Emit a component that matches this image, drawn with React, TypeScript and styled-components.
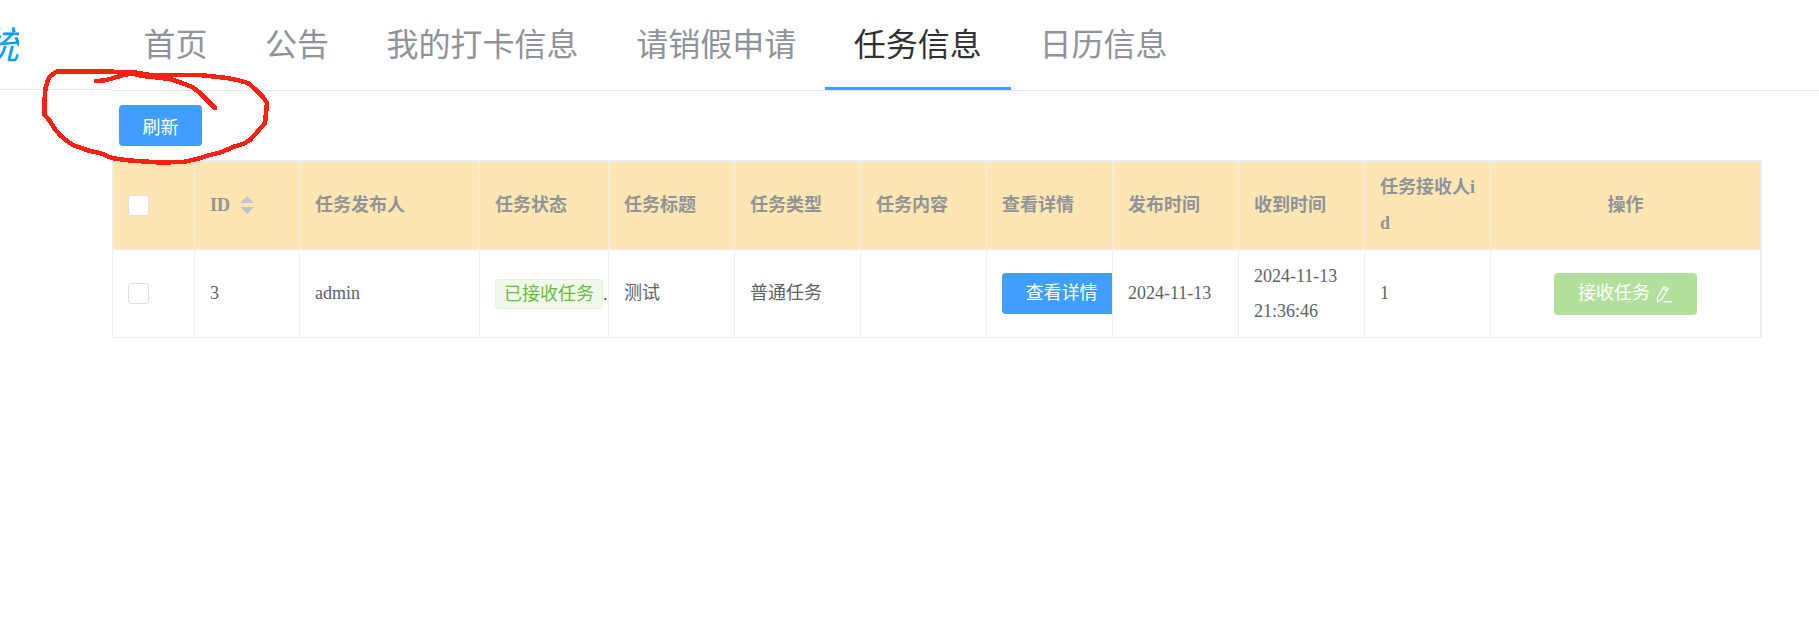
import React from "react";
import styled, { createGlobalStyle } from "styled-components";

const Global = createGlobalStyle`
  html, body { margin: 0; padding: 0; background: #fff; }
  body {
    font-family: "Liberation Serif", "Noto Sans CJK SC", serif;
    font-size: 18px;
    color: #606266;
    overflow: hidden;
  }
`;

const Page = styled.div`
  position: relative;
  width: 1819px;
  height: 628px;
`;

const Header = styled.header`
  display: flex;
  align-items: flex-start;
  height: 91px;
`;

const LogoBox = styled.div`
  display: flex;
  box-sizing: border-box;
  width: 112px;
  height: 90px;
  border-bottom: 1px solid #e6e6e6;
  overflow: hidden;
`;

const LogoClip = styled.div`
  display: flex;
  justify-content: flex-end;
  width: 19px;
  overflow: hidden;
  flex: none;
`;

const Logo = styled.span`
  flex: none;
  font-size: 38px;
  line-height: 92px;
  font-style: italic;
  color: #0a9dff;
  white-space: nowrap;
`;

const Menu = styled.nav`
  display: flex;
  flex: 1;
  box-sizing: border-box;
  height: 91px;
  padding-left: 2.6px;
  border-bottom: 1px solid #e6e6e6;
`;

const Tab = styled.div<{ $active?: boolean }>`
  box-sizing: border-box;
  height: 90px;
  padding: 0 28.8px;
  font-size: 32px;
  line-height: 90px;
  white-space: nowrap;
  color: ${(p) => (p.$active ? "#303133" : "#909399")};
  border-bottom: 3px solid ${(p) => (p.$active ? "#409eff" : "transparent")};
`;

const Main = styled.main`
  padding: 14px 57px 0 112px;
`;

const Toolbar = styled.div`
  display: flex;
  height: 41px;
  padding-left: 7px;
  margin-bottom: 14px;
`;

const Button = styled.button<{ $color?: string }>`
  flex: none;
  box-sizing: border-box;
  height: 41px;
  padding: 0 23.5px;
  border: 0;
  border-radius: 4px;
  background: ${(p) => p.$color ?? "#409eff"};
  color: #fff;
  font: inherit;
  white-space: nowrap;
  display: inline-flex;
  align-items: center;
  gap: 5px;
`;

const Table = styled.table`
  table-layout: fixed;
  width: 1650px;
  border-collapse: separate;
  border-spacing: 0;
  border-top: 2px solid #ebeef5;
  border-left: 1px solid #ebeef5;
  border-right: 1px solid #ebeef5;
`;

const Col = styled.col<{ $w: number }>`
  width: ${(p) => p.$w}px;
`;

const Th = styled.th<{ $center?: boolean }>`
  box-sizing: border-box;
  height: 88px;
  padding: 7px 15px 8px;
  background: #fee6b3;
  color: #909399;
  font-weight: bold;
  line-height: 36px;
  text-align: ${(p) => (p.$center ? "center" : "left")};
  border-right: 1px solid #ebeef5;
  border-bottom: 1px solid #ebeef5;
  word-break: break-all;
  vertical-align: middle;
`;

const Td = styled.td<{ $center?: boolean }>`
  box-sizing: border-box;
  height: 88px;
  padding: 8px 0 8px 15px;
  background: #fff;
  line-height: 35px;
  text-align: ${(p) => (p.$center ? "center" : "left")};
  border-right: 1px solid #ebeef5;
  border-bottom: 1px solid #ebeef5;
  vertical-align: middle;
  overflow: hidden;
  white-space: nowrap;
`;

const ActionTd = styled(Td)`
  padding-left: 0;
`;

const ActionButton = styled(Button)`
  height: 42px;
  padding: 0 24px;
  vertical-align: middle;
`;

const Check = styled.span`
  display: block;
  box-sizing: border-box;
  width: 21px;
  height: 21px;
  background: #fff;
  border: 1px solid #dcdfe6;
  border-radius: 3px;
`;

const IdHead = styled.span`
  display: inline-flex;
  align-items: center;
  gap: 10px;
`;

const Tag = styled.span`
  display: inline-block;
  box-sizing: border-box;
  height: 30px;
  padding: 0 8px;
  line-height: 28px;
  color: #67c23a;
  background: #f0f9eb;
  border: 1px solid #e1f3d8;
  border-radius: 4px;
  vertical-align: middle;
`;

const Dot = styled.span`
  margin-left: 0;
  vertical-align: -1px;
`;

const Stacked = styled.span`
  display: block;
  white-space: normal;
  width: 100px;
`;

const Ink = styled.svg`
  position: absolute;
  left: 0;
  top: 0;
  pointer-events: none;
`;

const Sorter = () => (
  <svg width="14" height="18" viewBox="0 0 14 18" aria-hidden="true">
    <path d="M7 0 L14 7 H0 Z" fill="#c0c4cc" />
    <path d="M0 11 H14 L7 18 Z" fill="#c0c4cc" />
  </svg>
);

const EditIcon = () => (
  <svg width="18" height="18" viewBox="0 0 18 18" fill="none" stroke="#fff" strokeWidth="1.3" aria-hidden="true">
    <path d="M2.5 12.5 L9 1.5 L13 3.5 L6.5 14.5 L2.5 16.5 Z" />
    <path d="M8 3.4 L12 5.5" />
    <path d="M8.5 16.8 H17" />
  </svg>
);

const tabs = ["首页", "公告", "我的打卡信息", "请销假申请", "任务信息", "日历信息"];
const widths = [82, 105, 180, 129, 126, 126, 126, 126, 126, 126, 126, 270];
const heads = ["任务发布人", "任务状态", "任务标题", "任务类型", "任务内容", "查看详情", "发布时间", "收到时间", "任务接收人id"];

export default function App() {
  return (
    <Page>
      <Global />
      <Header>
        <LogoBox>
          <LogoClip>
            <Logo>任务管理系统</Logo>
          </LogoClip>
        </LogoBox>
        <Menu>
          {tabs.map((t) => (
            <Tab key={t} $active={t === "任务信息"}>
              {t}
            </Tab>
          ))}
        </Menu>
      </Header>
      <Main>
        <Toolbar>
          <Button>刷新</Button>
        </Toolbar>
        <Table>
          <colgroup>
            {widths.map((w, i) => (
              <Col key={i} $w={w} />
            ))}
          </colgroup>
          <thead>
            <tr>
              <Th>
                <Check />
              </Th>
              <Th>
                <IdHead>
                  ID
                  <Sorter />
                </IdHead>
              </Th>
              {heads.map((h) => (
                <Th key={h}>{h}</Th>
              ))}
              <Th $center>操作</Th>
            </tr>
          </thead>
          <tbody>
            <tr>
              <Td>
                <Check />
              </Td>
              <Td>3</Td>
              <Td>admin</Td>
              <Td>
                <Tag>已接收任务</Tag>
                <Dot>.</Dot>
              </Td>
              <Td>测试</Td>
              <Td>普通任务</Td>
              <Td />
              <Td>
                <Button>查看详情</Button>
              </Td>
              <Td>2024-11-13</Td>
              <Td>
                <Stacked>2024-11-13 21:36:46</Stacked>
              </Td>
              <Td>1</Td>
              <ActionTd $center>
                <ActionButton $color="#b3e19d">
                  接收任务
                  <EditIcon />
                </ActionButton>
              </ActionTd>
            </tr>
          </tbody>
        </Table>
      </Main>
      <Ink width="300" height="180" viewBox="0 0 300 180" aria-hidden="true">
        <path
          d="M96 81 L104 80.5 L112 78.5 L122 75.5 L132 73.5 L142 76 L153 77 L170 79 L182 83 L192 87 L199 92 L205 98 L215 108 M132 72 L96 71.5 L56.5 71.5 L50 76.5 L48 80 L45.5 88 L44.5 100 L44.5 115 L50 121 L54 128 L60 135 L67 141 L73 145 L84 149 L90 151 L100 153 L112 158 L125 160 L137 161 L160 162.5 L183 162 L197 159 L210 155 L222 152 L233 147 L243 144 L250 140 L258 131 L265 123 L267 103 L263 97 L256 90 L248 83 L237 80 L227 78 L200 75 L170 75 L150 75 L132 72"
          fill="none"
          stroke="#ff2012"
          strokeWidth="4.5"
          strokeLinejoin="round"
          strokeLinecap="round"
          shapeRendering="crispEdges"
        />
      </Ink>
    </Page>
  );
}
